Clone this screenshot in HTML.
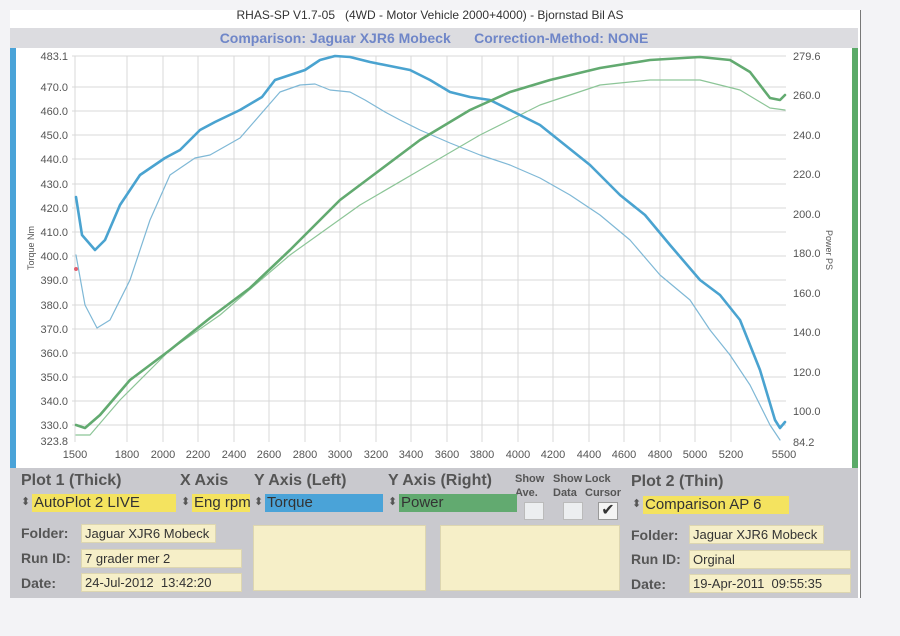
<!DOCTYPE html>
<html><head><meta charset="utf-8"><style>
body{margin:0;width:900px;height:636px;background:#f3f3f6;overflow:hidden;font-family:"Liberation Sans",sans-serif;position:relative}
.a{position:absolute}
.lab{font-weight:bold;color:#555;font-size:16px}
.sm{font-weight:bold;color:#555;font-size:12px}
.fld{position:absolute;background:#f6efc8;border:1px solid #ddd6b0;font-size:13px;color:#333;padding-left:3px;box-sizing:border-box;line-height:18px}
.sel{position:absolute;font-size:15px;color:#333;line-height:18px;padding-left:2px}
.arr{position:absolute;font-size:11px;color:#555}
</style></head><body>
<div class="a" style="left:10px;top:10px;width:850px;height:588px;background:#fff;border-right:1px solid #777"></div>
<div class="a" style="left:0;top:8px;width:860px;text-align:center;font-size:12px;color:#333">RHAS-SP V1.7-05 &nbsp; (4WD - Motor Vehicle 2000+4000) - Bjornstad Bil AS</div>
<div class="a" style="left:10px;top:28px;width:848px;height:20px;background:#dcdce0;text-align:center;font-weight:bold;font-size:14px;color:#6f86c8;line-height:20px">Comparison: Jaguar XJR6 Mobeck &nbsp;&nbsp;&nbsp;&nbsp; Correction-Method: NONE</div>
<div class="a" style="left:10px;top:48px;width:6px;height:420px;background:#4aa3d8"></div>
<div class="a" style="left:852px;top:48px;width:6px;height:420px;background:#5aaa68"></div>
<svg class="a" style="left:0;top:0" width="900" height="636" font-family="Liberation Sans" font-size="11" fill="#555">
<g stroke="#d8d8d8" stroke-width="1">
<line x1="75" y1="56" x2="75" y2="442"/><line x1="127" y1="56" x2="127" y2="442"/><line x1="163" y1="56" x2="163" y2="442"/><line x1="198" y1="56" x2="198" y2="442"/><line x1="234" y1="56" x2="234" y2="442"/><line x1="269" y1="56" x2="269" y2="442"/><line x1="305" y1="56" x2="305" y2="442"/><line x1="340" y1="56" x2="340" y2="442"/><line x1="376" y1="56" x2="376" y2="442"/><line x1="411" y1="56" x2="411" y2="442"/><line x1="447" y1="56" x2="447" y2="442"/><line x1="482" y1="56" x2="482" y2="442"/><line x1="518" y1="56" x2="518" y2="442"/><line x1="553" y1="56" x2="553" y2="442"/><line x1="589" y1="56" x2="589" y2="442"/><line x1="624" y1="56" x2="624" y2="442"/><line x1="660" y1="56" x2="660" y2="442"/><line x1="695" y1="56" x2="695" y2="442"/><line x1="731" y1="56" x2="731" y2="442"/>
<line x1="72" y1="87" x2="786" y2="87"/><line x1="72" y1="111" x2="786" y2="111"/><line x1="72" y1="135" x2="786" y2="135"/><line x1="72" y1="159" x2="786" y2="159"/><line x1="72" y1="184" x2="786" y2="184"/><line x1="72" y1="208" x2="786" y2="208"/><line x1="72" y1="232" x2="786" y2="232"/><line x1="72" y1="256" x2="786" y2="256"/><line x1="72" y1="280" x2="786" y2="280"/><line x1="72" y1="305" x2="786" y2="305"/><line x1="72" y1="329" x2="786" y2="329"/><line x1="72" y1="353" x2="786" y2="353"/><line x1="72" y1="377" x2="786" y2="377"/><line x1="72" y1="401" x2="786" y2="401"/><line x1="72" y1="425" x2="786" y2="425"/><line x1="72" y1="56" x2="786" y2="56"/>
</g>
<g text-anchor="end">
<text x="68" y="60">483.1</text><text x="68" y="91">470.0</text><text x="68" y="115">460.0</text><text x="68" y="139">450.0</text><text x="68" y="163">440.0</text><text x="68" y="188">430.0</text><text x="68" y="212">420.0</text><text x="68" y="236">410.0</text><text x="68" y="260">400.0</text><text x="68" y="284">390.0</text><text x="68" y="309">380.0</text><text x="68" y="333">370.0</text><text x="68" y="357">360.0</text><text x="68" y="381">350.0</text><text x="68" y="405">340.0</text><text x="68" y="429">330.0</text><text x="68" y="445">323.8</text>
</g>
<g text-anchor="start">
<text x="793" y="60">279.6</text><text x="793" y="99">260.0</text><text x="793" y="139">240.0</text><text x="793" y="178">220.0</text><text x="793" y="218">200.0</text><text x="793" y="257">180.0</text><text x="793" y="297">160.0</text><text x="793" y="336">140.0</text><text x="793" y="376">120.0</text><text x="793" y="415">100.0</text><text x="793" y="446">84.2</text>
</g>
<g text-anchor="middle">
<text x="75" y="458">1500</text><text x="127" y="458">1800</text><text x="163" y="458">2000</text><text x="198" y="458">2200</text><text x="234" y="458">2400</text><text x="269" y="458">2600</text><text x="305" y="458">2800</text><text x="340" y="458">3000</text><text x="376" y="458">3200</text><text x="411" y="458">3400</text><text x="447" y="458">3600</text><text x="482" y="458">3800</text><text x="518" y="458">4000</text><text x="553" y="458">4200</text><text x="589" y="458">4400</text><text x="624" y="458">4600</text><text x="660" y="458">4800</text><text x="695" y="458">5000</text><text x="731" y="458">5200</text><text x="784" y="458">5500</text>
</g>
<text x="34" y="248" font-size="9" transform="rotate(-90 34 248)" text-anchor="middle">Torque Nm</text>
<text x="826" y="250" font-size="9" transform="rotate(90 826 250)" text-anchor="middle">Power PS</text>
<g fill="none" stroke-linejoin="round" stroke-linecap="round">
<polyline stroke="#7fb8d6" stroke-width="1.2" points="76,255 85,305 97,328 110,320 130,280 150,220 170,175 195,158 210,155 240,138 260,115 280,92 300,85 315,84 330,90 350,92 365,100 385,112 400,120 420,130 450,143 480,155 510,165 540,178 570,195 600,215 630,240 660,275 690,300 710,330 730,355 750,385 770,425 780,440"/>
<polyline stroke="#8cc597" stroke-width="1.2" points="76,435 90,435 120,400 170,350 220,315 290,255 360,205 420,170 480,135 540,105 600,85 650,80 700,80 740,90 770,108 785,110"/>
<polyline stroke="#4aa3d0" stroke-width="2.6" points="76,197 82,235 95,250 105,240 120,205 140,175 165,158 180,150 200,130 215,122 240,110 262,97 275,80 290,75 305,70 320,60 335,56 350,57 370,62 390,66 410,70 430,80 450,92 470,97 490,100 510,110 540,125 565,145 590,165 620,195 645,215 670,245 700,280 720,295 740,320 760,370 775,420 780,428 785,422"/>
<polyline stroke="#62aa70" stroke-width="2.6" points="76,425 85,428 100,415 130,380 170,350 210,318 250,288 290,250 340,200 380,170 420,140 470,110 510,92 550,80 600,68 650,60 700,57 730,60 750,72 770,98 780,100 785,95"/>
</g>
<circle cx="76" cy="269" r="2" fill="#e06070"/>
</svg>
<div class="a" style="left:10px;top:468px;width:848px;height:130px;background:#c9c9ce"></div>
<div class="a lab" style="left:21px;top:472px">Plot 1 (Thick)</div>
<div class="a lab" style="left:180px;top:472px">X Axis</div>
<div class="a lab" style="left:254px;top:472px">Y Axis (Left)</div>
<div class="a lab" style="left:388px;top:472px">Y Axis (Right)</div>
<div class="a sm" style="left:515px;top:472px;line-height:14px;font-size:11px">Show<br>Ave.</div>
<div class="a sm" style="left:553px;top:472px;line-height:14px;font-size:11px">Show<br>Data</div>
<div class="a sm" style="left:585px;top:472px;line-height:14px;font-size:11px">Lock<br>Cursor</div>
<div class="a lab" style="left:631px;top:473px">Plot 2 (Thin)</div>
<div class="arr" style="left:21px;top:495px">⬍</div><div class="sel" style="left:32px;top:494px;width:142px;background:#f4e35f">AutoPlot 2 LIVE</div>
<div class="arr" style="left:181px;top:495px">⬍</div><div class="sel" style="left:192px;top:494px;width:56px;background:#f4e35f;overflow:hidden;white-space:nowrap">Eng rpm</div>
<div class="arr" style="left:254px;top:495px">⬍</div><div class="sel" style="left:265px;top:494px;width:116px;background:#4aa3d8">Torque</div>
<div class="arr" style="left:388px;top:495px">⬍</div><div class="sel" style="left:399px;top:494px;width:116px;background:#62aa70">Power</div>
<div class="a" style="left:524px;top:502px;width:18px;height:16px;background:#eceef0;border:1px solid #bbb"></div>
<div class="a" style="left:563px;top:502px;width:18px;height:16px;background:#eceef0;border:1px solid #bbb"></div>
<div class="a" style="left:598px;top:502px;width:18px;height:16px;background:#f4f4f4;border:1px solid #999;font-size:16px;line-height:16px;text-align:center;color:#333">✔</div>
<div class="arr" style="left:632px;top:497px">⬍</div><div class="sel" style="left:643px;top:496px;width:144px;background:#f4e35f">Comparison AP 6</div>
<div class="a lab" style="left:21px;top:525px;font-size:14px">Folder:</div>
<div class="a lab" style="left:21px;top:550px;font-size:14px">Run ID:</div>
<div class="a lab" style="left:21px;top:575px;font-size:14px">Date:</div>
<div class="fld" style="left:81px;top:524px;width:135px;height:19px">Jaguar XJR6 Mobeck</div>
<div class="fld" style="left:81px;top:549px;width:161px;height:19px">7 grader mer 2</div>
<div class="fld" style="left:81px;top:573px;width:161px;height:19px">24-Jul-2012 &nbsp;13:42:20</div>
<div class="fld" style="left:253px;top:525px;width:173px;height:66px"></div>
<div class="fld" style="left:440px;top:525px;width:180px;height:66px"></div>
<div class="a lab" style="left:631px;top:527px;font-size:14px">Folder:</div>
<div class="a lab" style="left:631px;top:551px;font-size:14px">Run ID:</div>
<div class="a lab" style="left:631px;top:576px;font-size:14px">Date:</div>
<div class="fld" style="left:689px;top:525px;width:135px;height:19px">Jaguar XJR6 Mobeck</div>
<div class="fld" style="left:689px;top:550px;width:162px;height:19px">Orginal</div>
<div class="fld" style="left:689px;top:574px;width:162px;height:19px">19-Apr-2011 &nbsp;09:55:35</div>
</body></html>
